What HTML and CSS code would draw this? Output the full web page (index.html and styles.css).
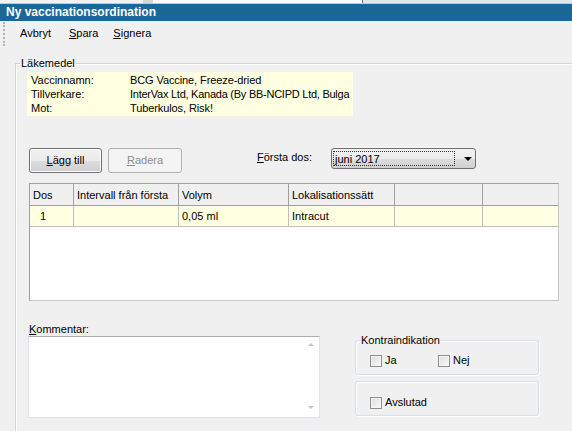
FILE: index.html
```html
<!DOCTYPE html>
<html>
<head>
<meta charset="utf-8">
<link rel="stylesheet" href="styles.css">
</head>
<body>
<div class="tabstrip"><span class="t1"></span><span class="t2"></span><span class="t3"></span><span class="t4"></span></div>
<div class="titlebar">Ny vaccinationsordination</div>
<div class="menubar">
  <div class="grip"></div>
  <span class="mi mi-avbryt">Avbryt</span>
  <span class="mi mi-spara"><u>S</u>para</span>
  <span class="mi mi-signera"><u>S</u>ignera</span>
</div>
<fieldset class="main">
  <legend class="main-legend">Läkemedel</legend>
  <div class="info">
    <div class="irow"><span class="ilabel">Vaccinnamn:</span><span class="ival">BCG Vaccine, Freeze-dried</span></div>
    <div class="irow"><span class="ilabel">Tillverkare:</span><span class="ival ival-tight">InterVax Ltd, Kanada (By BB-NCIPD Ltd, Bulga</span></div>
    <div class="irow"><span class="ilabel">Mot:</span><span class="ival">Tuberkulos, Risk!</span></div>
  </div>
  <div class="actions">
    <button class="btn btn-add"><u>L</u>ägg till</button>
    <button class="btn btn-del" disabled><u>R</u>adera</button>
    <span class="dos-label"><u>F</u>örsta dos:</span>
    <div class="combo">
      <span class="combo-text">juni 2017</span>
      <span class="combo-arrow"></span>
    </div>
  </div>
  <div class="grid">
    <table class="gtable">
      <colgroup>
        <col class="c1"><col class="c2"><col class="c3"><col class="c4"><col class="c5"><col class="c6">
      </colgroup>
      <thead>
        <tr><th>Dos</th><th>Intervall från första</th><th>Volym</th><th>Lokalisationssätt</th><th></th><th></th></tr>
      </thead>
      <tbody>
        <tr class="sel"><td class="dos">1</td><td></td><td>0,05 ml</td><td>Intracut</td><td></td><td></td></tr>
      </tbody>
    </table>
  </div>
  <div class="bottom">
    <div class="comment">
      <div class="comment-label"><u>K</u>ommentar:</div>
      <div class="textbox">
        <div class="textarea-body"></div>
        <div class="vscroll"><span class="arr-up"></span><span class="arr-down"></span></div>
      </div>
    </div>
    <div class="side">
      <fieldset class="group">
        <legend class="group-legend">Kontraindikation</legend>
        <div class="checks">
          <label class="chk chk-ja"><span class="box"></span>Ja</label>
          <label class="chk"><span class="box"></span>Nej</label>
        </div>
      </fieldset>
      <div class="group group-plain">
        <label class="chk"><span class="box"></span>Avslutad</label>
      </div>
    </div>
  </div>
</fieldset>
</body>
</html>
```
FILE: styles.css
```css
html, body {
  margin: 0;
  padding: 0;
}
body {
  width: 572px;
  height: 431px;
  overflow: hidden;
  background: #f0f0f0;
  font-family: "Liberation Sans", Arial, sans-serif;
  font-size: 11px;
  color: #000;
}
u {
  text-decoration: underline;
  text-underline-offset: 1px;
}
.tabstrip {
  display: flex;
  height: 3px;
  border-bottom: 1px solid #c9c9c9;
  background: #f4f4f4;
}
.tabstrip .t1 { width: 143px; background: #f2f2f2; }
.tabstrip .t2 { width: 10px; background: #d6d6d6; }
.tabstrip .t3 { width: 209px; background: #fbfbfb; border-right: 1px solid #707070; }
.tabstrip .t4 { flex: 1; background: #dfe7ee; }
.titlebar {
  height: 17px;
  line-height: 17px;
  background: #1b6898;
  color: #fff;
  font-weight: bold;
  font-size: 12px;
  padding-left: 6px;
}
.menubar {
  display: flex;
  align-items: flex-start;
  height: 36px;
}
.grip {
  width: 0;
  height: 24px;
  margin: 1px 0 0 3px;
  border-left: 2px dotted #b4b4b4;
}
.mi {
  line-height: 13px;
  margin-top: 6px;
}
.mi-avbryt { margin-left: 15px; }
.mi-spara { margin-left: 18px; }
.mi-signera { margin-left: 15px; }

.main {
  margin: 0 0 0 15px;
  padding: 0;
  border: 0;
  border-top: 1px solid #d5d5d5;
  border-left: 1px solid #d5d5d5;
  box-shadow: inset 1px 1px 0 #fff;
  min-width: 0;
  height: 374px;
  box-sizing: border-box;
  overflow: hidden;
}
.main-legend {
  margin-left: 4px;
  padding: 0 1px;
  line-height: 13px;
}
.info {
  margin: 2px 0 0 11px;
  width: 322px;
  height: 43px;
  padding: 1px 0 0 4px;
  background: #ffffe1;
  overflow: hidden;
}
.irow {
  display: flex;
  line-height: 14px;
  white-space: nowrap;
}
.ilabel {
  width: 99px;
  flex: none;
}
.ival {
  white-space: nowrap;
  letter-spacing: -0.1px;
}
.ival-tight {
  letter-spacing: -0.25px;
}

.actions {
  display: flex;
  align-items: flex-start;
  margin: 32px 0 0 13px;
  height: 25px;
}
.btn {
  font-family: inherit;
  font-size: 11px;
  height: 25px;
  padding: 0;
  border-radius: 3px;
  line-height: 21px;
}
.btn-add {
  width: 73px;
  color: #000;
  border: 1px solid #707070;
  background: linear-gradient(#f2f2f2 0%, #ebebeb 50%, #dddddd 51%, #cfcfcf 100%);
  box-shadow: inset 0 0 0 1px #fcfcfc;
}
.btn-del {
  width: 74px;
  margin-left: 6px;
  color: #8d8d8d;
  border: 1px solid #adb2b5;
  background: #f4f4f4;
}
.dos-label {
  margin: 3px 0 0 75px;
  width: 74px;
  line-height: 13px;
}
.combo {
  width: 143px;
  height: 19px;
  border: 1px solid #707070;
  border-radius: 3px;
  background: linear-gradient(#f2f2f2 0%, #ebebeb 50%, #dddddd 51%, #cfcfcf 100%);
  display: flex;
  align-items: center;
}
.combo-text {
  margin-left: 1px;
  width: 122px;
  height: 15px;
  line-height: 15px;
  padding-left: 1px;
  border: 1px dotted #333;
  box-sizing: border-box;
}
.combo-arrow {
  margin-left: 9px;
  width: 0;
  height: 0;
  border-left: 4px solid transparent;
  border-right: 4px solid transparent;
  border-top: 4px solid #000;
}

.grid {
  margin: 10px 0 0 13px;
  width: 528px;
  height: 116px;
  border: 1px solid #a0a0a0;
  border-right-color: #c8c8c8;
  border-bottom-color: #c8c8c8;
  background: #fff;
  overflow: hidden;
}
.gtable {
  border-collapse: collapse;
  table-layout: fixed;
  width: 530px;
  margin: -1px 0 0 -1px;
}
.c1 { width: 44px; }
.c2 { width: 105px; }
.c3 { width: 110px; }
.c4 { width: 106px; }
.c5 { width: 88px; }
.c6 { width: 77px; }
.gtable th,
.gtable td {
  border: 1px solid #a0a0a0;
  padding: 0 0 0 3px;
  text-align: left;
  font-weight: normal;
  white-space: nowrap;
  overflow: hidden;
}
.gtable th {
  height: 21px;
  background: #f0f0f0;
}
.gtable td {
  height: 20px;
  border-color: #c0c0c0;
  border-top-color: #a0a0a0;
}
.gtable tr.sel td {
  background: #ffffe1;
}
.gtable td.dos {
  padding-left: 10px;
}

.bottom {
  display: flex;
  align-items: flex-start;
  margin-left: 12px;
}
.comment {
  width: 292px;
}
.comment-label {
  margin-top: 21px;
  padding-left: 1px;
  line-height: 14px;
}
.textbox {
  display: flex;
  height: 80px;
  border: 1px solid #e2e3ea;
  border-top-color: #abadb3;
  background: #fff;
}
.textarea-body {
  flex: 1;
}
.vscroll {
  width: 17px;
  display: flex;
  flex-direction: column;
  justify-content: space-between;
  align-items: center;
  padding: 6px 0 8px;
}
.arr-up,
.arr-down {
  width: 0;
  height: 0;
  border-left: 3px solid transparent;
  border-right: 3px solid transparent;
}
.arr-up { border-bottom: 3px solid #c4c4c4; }
.arr-down { border-top: 3px solid #c4c4c4; }

.side {
  margin-left: 35px;
  width: 184px;
  display: flex;
  flex-direction: column;
}
.group {
  margin: 33px 0 0 0;
  padding: 0;
  min-width: 0;
  height: 41px;
  border: 1px solid #d5dfe5;
  border-radius: 3px;
  box-shadow: inset 1px 1px 0 #fff, 1px 1px 0 #fff;
  box-sizing: border-box;
}
.group-legend {
  margin-left: 5px;
  padding: 0;
  line-height: 13px;
}
.checks {
  display: flex;
  padding: 7px 0 0 14px;
}
.chk {
  display: flex;
  align-items: center;
  line-height: 13px;
}
.chk-ja {
  width: 68px;
}
.box {
  width: 10px;
  height: 10px;
  margin-right: 3px;
  border: 1px solid #8e8f8f;
  background: linear-gradient(135deg, #dcdcdc, #fbfbfb);
  box-shadow: inset 0 0 0 1px #f4f4f4;
}
.group-plain {
  margin-top: 6px;
  height: 35px;
  padding: 14px 0 0 14px;
  box-sizing: border-box;
  display: flex;
  align-items: flex-start;
}
```
